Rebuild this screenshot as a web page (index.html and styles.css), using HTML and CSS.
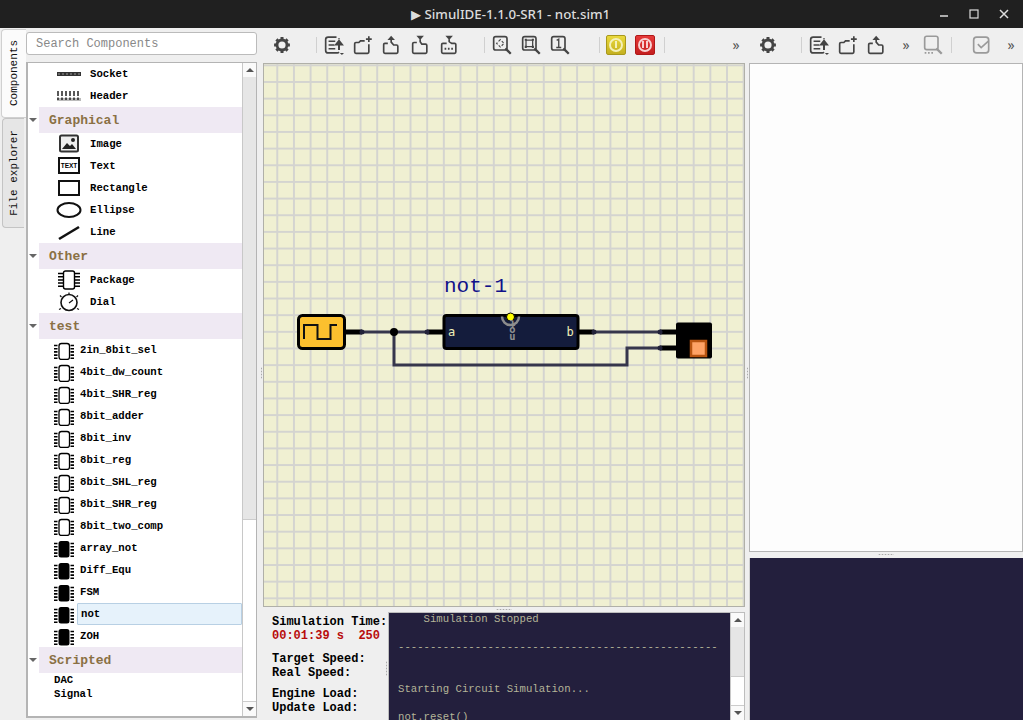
FILE: index.html
```html
<!DOCTYPE html>
<html lang="en">
<head>
    <meta charset="UTF-8">
    <title>SimulIDE-1.1.0-SR1 - not.sim1</title>
    <link rel="stylesheet" href="styles.css">
</head>
<body>
    <svg class="defs" width="0" height="0">
        <defs>
            <symbol id="i-gear" viewBox="0 0 24 24">
                <circle cx="12" cy="12" r="6" fill="none" stroke="currentColor" stroke-width="3.4"/>
                <path d="M12 2.500v4M12 17.500v4M2.500 12h4M17.500 12h4M5.300 5.300l2.800 2.800M15.900 15.900l2.800 2.800M5.300 18.700l2.800-2.800M15.900 8.100l2.800-2.800" stroke="currentColor" stroke-width="3.600" fill="none"/>
            </symbol>
            <symbol id="i-list" viewBox="0 0 24 24">
                <path d="M15 2.500H5a3 3 0 0 0-3 3v13a3 3 0 0 0 3 3h11a3 3 0 0 0 2-1M18 5V4" fill="none" stroke="currentColor" stroke-width="2"/>
                <path d="M5.500 7.500h8M5.500 12h7M5.500 16.500h8" stroke="currentColor" stroke-width="2"/>
                <path d="M18 18V9M14.500 11.500L18 7l3.500 4.500z" stroke="currentColor" stroke-width="2.400" fill="currentColor"/>
                <path d="M19 21.500h5l-2.500 2.500z" fill="currentColor"/>
            </symbol>
            <symbol id="i-new" viewBox="0 0 24 24">
                <path d="M14 7H9L7 9H3.500A1.500 1.500 0 0 0 2 10.500v10A1.500 1.500 0 0 0 3.500 22h14a1.500 1.500 0 0 0 1.500-1.500V11" fill="none" stroke="currentColor" stroke-width="2"/>
                <path d="M19 1.500v7M15.500 5h7" stroke="currentColor" stroke-width="2"/>
            </symbol>
            <symbol id="i-open" viewBox="0 0 24 24">
                <path d="M7 10H3.500A1.500 1.500 0 0 0 2 11.500v9A1.500 1.500 0 0 0 3.500 22h14a1.500 1.500 0 0 0 1.500-1.500v-7A1.500 1.500 0 0 0 17.500 12H14l-3-3.500V6" fill="none" stroke="currentColor" stroke-width="2"/>
                <path d="M6.500 6h9L11 1z" fill="currentColor"/>
            </symbol>
            <symbol id="i-down" viewBox="0 0 24 24">
                <path d="M7 9H3.500A1.500 1.500 0 0 0 2 10.500v10A1.500 1.500 0 0 0 3.500 22h14a1.500 1.500 0 0 0 1.500-1.500v-8A1.500 1.500 0 0 0 17.500 11H13l-2-3V5" fill="none" stroke="currentColor" stroke-width="2"/>
                <path d="M6.500 1h9L11 6z" fill="currentColor"/>
            </symbol>
            <symbol id="i-dots" viewBox="0 0 24 24">
                <path d="M8 10H3.500A1.500 1.500 0 0 0 2 11.500v9A1.500 1.500 0 0 0 3.500 22h14a1.500 1.500 0 0 0 1.500-1.500v-9a1.500 1.500 0 0 0-1.500-1.500H14l-3-2V5" fill="none" stroke="currentColor" stroke-width="2"/>
                <path d="M6.500 1h9L11 6z" fill="currentColor"/>
                <path d="M5.500 16.500h2M9.500 16.500h2M13.500 16.500h2" stroke="currentColor" stroke-width="2.200"/>
            </symbol>
            <symbol id="i-zfit" viewBox="0 0 24 24">
                <rect x="2" y="2" width="16" height="16" rx="2.500" fill="none" stroke="currentColor" stroke-width="2"/>
                <path d="M16 16l6.500 6.500" stroke="currentColor" stroke-width="2.800"/>
                <path d="M10 5.500L5.500 10l4.500 4.500 4.500-4.500z" fill="none" stroke="currentColor" stroke-width="1.300" stroke-dasharray="3 2"/>
            </symbol>
            <symbol id="i-zsel" viewBox="0 0 24 24">
                <rect x="2" y="2" width="16" height="16" rx="2.500" fill="none" stroke="currentColor" stroke-width="2"/>
                <path d="M16 16l6.500 6.500" stroke="currentColor" stroke-width="2.800"/>
                <rect x="6" y="6" width="8" height="8" rx="1" fill="none" stroke="currentColor" stroke-width="1.500"/>
                <path d="M4.500 4.500h2.500v2.500h-2.500zM13 4.500h2.500v2.500H13zM4.500 13h2.500v2.500h-2.500zM13 13h2.500v2.500H13z" fill="currentColor"/>
            </symbol>
            <symbol id="i-zone" viewBox="0 0 24 24">
                <rect x="2" y="2" width="16" height="16" rx="2.500" fill="none" stroke="currentColor" stroke-width="2"/>
                <path d="M16 16l6.500 6.500" stroke="currentColor" stroke-width="2.800"/>
                <path d="M8 6.500l2.500-1.500v10M7.500 15h6" fill="none" stroke="currentColor" stroke-width="1.600"/>
            </symbol>
            <symbol id="i-zdots" viewBox="0 0 24 24">
                <rect x="2" y="1.500" width="16" height="16" rx="2.500" fill="none" stroke="currentColor" stroke-width="2"/>
                <path d="M16 16l6.500 6.500" stroke="currentColor" stroke-width="2.800"/>
                <path d="M2 21.500h2M6 21.500h2M10 21.500h2" stroke="currentColor" stroke-width="2"/>
            </symbol>
            <symbol id="i-check" viewBox="0 0 24 24">
                <rect x="2" y="2.500" width="18" height="19" rx="3.500" fill="none" stroke="currentColor" stroke-width="2"/>
                <path d="M7 11l4 4 9-8" fill="none" stroke="currentColor" stroke-width="2"/>
            </symbol>

            <symbol id="c-socket" viewBox="0 0 26 12">
                <rect x="1" y="4" width="24" height="4" fill="#333"/>
                <path d="M2 6h22" stroke="#999" stroke-width="1" stroke-dasharray="2 2"/>
            </symbol>
            <symbol id="c-header" viewBox="0 0 26 12">
                <rect x="1" y="8" width="24" height="3" fill="#bbb"/>
                <path d="M2 1v9M6 1v9M10 1v9M14 1v9M18 1v9M22 1v9" stroke="#222" stroke-width="1.500" stroke-dasharray="5 1.500"/>
            </symbol>
            <symbol id="c-image" viewBox="0 0 22 20">
                <rect x="2" y="1.500" width="18" height="16" rx="1.500" fill="#eee" stroke="#333" stroke-width="2"/>
                <path d="M4 15l5-6 3 3 2-2 4 5z" fill="#222"/>
                <circle cx="15" cy="6" r="2" fill="#222"/>
            </symbol>
            <symbol id="c-chip" viewBox="0 0 22 20">
                <rect x="5" y="3.500" width="10.500" height="16" rx="2.500" fill="#fff" stroke="#000" stroke-width="1.300"/>
                <path d="M0 5.500h3.500M0 8.700h3.500M0 11.900h3.500M0 15.100h3.500M0 18.300h3.500M16.500 5.500H20M16.500 8.700H20M16.500 11.900H20M16.500 15.100H20M16.500 18.300H20" stroke="#000" stroke-width="1.600"/>
            </symbol>
            <symbol id="c-chipb" viewBox="0 0 22 20">
                <rect x="4.500" y="3" width="11" height="16.500" rx="2.500" fill="#000"/>
                <path d="M0 5.500h3.500M0 8.700h3.500M0 11.900h3.500M0 15.100h3.500M0 18.300h3.500M16.500 5.500H20M16.500 8.700H20M16.500 11.900H20M16.500 15.100H20M16.500 18.300H20" stroke="#000" stroke-width="1.600"/>
            </symbol>
        </defs>
    </svg>

    <header class="titlebar">
        <span class="title">▶ SimulIDE-1.1.0-SR1 - not.sim1</span>
        <div class="winbtns">
            <svg width="10" height="10"><path d="M1 7h8" stroke="#ddd" stroke-width="1.500"/></svg>
            <svg width="10" height="10"><rect x="1" y="1" width="8" height="8" fill="none" stroke="#ddd" stroke-width="1.200"/></svg>
            <svg width="10" height="10"><path d="M1 1l8 8M9 1l-8 8" stroke="#ddd" stroke-width="1.500"/></svg>
        </div>
    </header>

    <div class="main">
        <aside class="side">
            <div class="tabs">
                <div class="tab active"><span>Components</span></div>
                <div class="tab"><span>File explorer</span></div>
            </div>
            <div class="panel">
                <div class="search">Search Components</div>
                <div class="tree">
                    <div class="tree-body">
                        <div class="row"><svg class="ico"><use href="#c-socket"/></svg>Socket</div>
                        <div class="row"><svg class="ico"><use href="#c-header"/></svg>Header</div>
                        <div class="group">Graphical</div>
                        <div class="row"><svg class="ico"><use href="#c-image"/></svg>Image</div>
                        <div class="row">
                            <svg class="ico" viewBox="0 0 26 20"><rect x="3" y="2" width="20" height="15" fill="#fff" stroke="#111" stroke-width="2"/><text x="13" y="12" class="ico-text">TEXT</text></svg>Text
                        </div>
                        <div class="row">
                            <svg class="ico" viewBox="0 0 26 20"><rect x="3" y="3" width="20" height="14" fill="#fff" stroke="#111" stroke-width="2"/></svg>Rectangle
                        </div>
                        <div class="row">
                            <svg class="ico" viewBox="0 0 26 20"><ellipse cx="13" cy="10" rx="11.500" ry="7" fill="#fff" stroke="#111" stroke-width="2"/></svg>Ellipse
                        </div>
                        <div class="row">
                            <svg class="ico" viewBox="0 0 26 20"><path d="M3 17L23 5" stroke="#111" stroke-width="2.600"/></svg>Line
                        </div>
                        <div class="group">Other</div>
                        <div class="row">
                            <svg class="ico" viewBox="0 0 26 20"><rect x="7.500" y="1" width="11" height="18" rx="2" fill="#fff" stroke="#000" stroke-width="1.400"/><path d="M2 3.500h5M2 6.700h5M2 9.900h5M2 13.100h5M2 16.300h5M19 3.500h5M19 6.700h5M19 9.900h5M19 13.100h5M19 16.300h5" stroke="#000" stroke-width="1.500"/></svg>Package
                        </div>
                        <div class="row">
                            <svg class="ico" viewBox="0 0 26 20"><circle cx="13" cy="10.500" r="8" fill="#fff" stroke="#111" stroke-width="1.600"/><path d="M13 11l4-3M13 .5v2M4 3.500l1.500 1.500M22 3.500L20.500 5M3 17.500l2-1M23 17.500l-2-1" stroke="#111" stroke-width="1.200"/></svg>Dial
                        </div>
                        <div class="group">test</div>
                        <div class="row sub"><svg class="chip"><use href="#c-chip"/></svg>2in_8bit_sel</div>
                        <div class="row sub"><svg class="chip"><use href="#c-chip"/></svg>4bit_dw_count</div>
                        <div class="row sub"><svg class="chip"><use href="#c-chip"/></svg>4bit_SHR_reg</div>
                        <div class="row sub"><svg class="chip"><use href="#c-chip"/></svg>8bit_adder</div>
                        <div class="row sub"><svg class="chip"><use href="#c-chip"/></svg>8bit_inv</div>
                        <div class="row sub"><svg class="chip"><use href="#c-chip"/></svg>8bit_reg</div>
                        <div class="row sub"><svg class="chip"><use href="#c-chip"/></svg>8bit_SHL_reg</div>
                        <div class="row sub"><svg class="chip"><use href="#c-chip"/></svg>8bit_SHR_reg</div>
                        <div class="row sub"><svg class="chip"><use href="#c-chip"/></svg>8bit_two_comp</div>
                        <div class="row sub"><svg class="chip"><use href="#c-chipb"/></svg>array_not</div>
                        <div class="row sub"><svg class="chip"><use href="#c-chipb"/></svg>Diff_Equ</div>
                        <div class="row sub"><svg class="chip"><use href="#c-chipb"/></svg>FSM</div>
                        <div class="row sub"><svg class="chip"><use href="#c-chipb"/></svg><span class="selected">not</span></div>
                        <div class="row sub"><svg class="chip"><use href="#c-chipb"/></svg>ZOH</div>
                        <div class="group">Scripted</div>
                        <div class="row plain">DAC</div>
                        <div class="row plain">Signal</div>
                    </div>
                    <div class="sbar">
                        <div class="sbtn"><i class="up"></i></div>
                        <div class="shandle tree-handle"></div>
                        <div class="strack"></div>
                        <div class="sbtn"><i class="dn"></i></div>
                    </div>
                </div>
            </div>
        </aside>

        <div class="work">
            <div class="toolbar">
                <button class="tb"><svg><use href="#i-gear"/></svg></button>
                <i class="sep s1"></i>
                <button class="tb"><svg><use href="#i-list"/></svg></button>
                <button class="tb"><svg><use href="#i-new"/></svg></button>
                <button class="tb"><svg><use href="#i-open"/></svg></button>
                <button class="tb"><svg><use href="#i-down"/></svg></button>
                <button class="tb"><svg><use href="#i-dots"/></svg></button>
                <i class="sep s1"></i>
                <button class="tb"><svg><use href="#i-zfit"/></svg></button>
                <button class="tb"><svg><use href="#i-zsel"/></svg></button>
                <button class="tb"><svg><use href="#i-zone"/></svg></button>
                <i class="sep s2"></i>
                <button class="tb"><span class="pow yellow"><b></b></span></button>
                <button class="tb"><span class="pow red"><b class="pause"></b></span></button>
                <i class="sep s3"></i>
                <span class="more m1">»</span>
                <button class="tb t2"><svg><use href="#i-gear"/></svg></button>
                <i class="sep s4"></i>
                <button class="tb"><svg><use href="#i-list"/></svg></button>
                <button class="tb"><svg><use href="#i-new"/></svg></button>
                <button class="tb"><svg><use href="#i-open"/></svg></button>
                <span class="more">»</span>
                <button class="tb off t3"><svg><use href="#i-zdots"/></svg></button>
                <i class="sep s5"></i>
                <button class="tb off t4"><svg><use href="#i-check"/></svg></button>
                <span class="more">»</span>
            </div>

            <div class="panes">
                <div class="center">
                    <div class="canvas">
                        <svg class="circuit" viewBox="263 63 482 544" width="482" height="544">
                            <text x="444" y="292" class="comp-name">not-1</text>

                            <!-- cables -->
                            <path d="M360 332H429M394 332V365H627V348H662M594 332H662" fill="none" stroke="#36364c" stroke-width="3"/>
                            <circle cx="394" cy="332" r="4" fill="#000"/>

                            <!-- pins -->
                            <path d="M345 332H362M427 332H443M578 332H594M660 332H676M660 348H676" stroke="#000" stroke-width="5"/>
                            <circle cx="362" cy="332" r="2.500" fill="#23233a"/>
                            <circle cx="427" cy="332" r="2.500" fill="#23233a"/>
                            <circle cx="594" cy="332" r="2.500" fill="#23233a"/>
                            <circle cx="660" cy="332" r="2.500" fill="#23233a"/>
                            <circle cx="660" cy="348" r="2.500" fill="#23233a"/>

                            <!-- clock -->
                            <rect x="298.500" y="315.500" width="46" height="33" rx="4" fill="#fcc02e" stroke="#000" stroke-width="3"/>
                            <path d="M304 339V325H317.500V339H330.500V325H337" fill="none" stroke="#111" stroke-width="2"/>

                            <!-- subcircuit -->
                            <rect x="444" y="315.500" width="134" height="33" rx="2.500" fill="#141c3c" stroke="#000" stroke-width="3"/>
                            <text x="448" y="336" class="pin-label">a</text>
                            <text x="566.500" y="336" class="pin-label">b</text>
                            <path d="M502 316.500a8.500 8.500 0 0 0 17 0" fill="none" stroke="#8c8c8c" stroke-width="2.500"/>
                            <circle cx="510.500" cy="317" r="4" fill="#ff0" stroke="#000" stroke-width="1"/>
                            <text x="515.500 515.500 515.500" y="334 327 320" rotate="180" class="chip-label">not</text>

                            <!-- led -->
                            <rect x="676" y="322.500" width="36" height="36" rx="2" fill="#000"/>
                            <rect x="691" y="341" width="15" height="15" fill="#ffa366" stroke="#b85410" stroke-width="2.500"/>
                        </svg>
                    </div>
                    <div class="hgrip"></div>
                    <div class="bottom">
                        <div class="info">
                            <div>Simulation Time:</div>
                            <div class="time">00:01:39 s&nbsp;&nbsp;250</div>
                            <div class="gap">Target Speed:</div>
                            <div>Real Speed:</div>
                            <div class="gap2">Engine Load:</div>
                            <div>Update Load:</div>
                        </div>
                        <div class="term-wrap">
                            <pre class="term">    Simulation Stopped

--------------------------------------------------


Starting Circuit Simulation...

not.reset()</pre>
                            <div class="sbar">
                                <div class="sbtn"><i class="up"></i></div>
                                <div class="shandle term-handle"></div>
                                <div class="strack"></div>
                                <div class="sbtn"><i class="dn"></i></div>
                            </div>
                        </div>
                    </div>
                </div>
                <div class="right">
                    <div class="props"></div>
                    <div class="hgrip small"></div>
                    <div class="dark"></div>
                </div>
            </div>
        </div>
    </div>
</body>
</html>
```

FILE: styles.css
```css
* {
    margin: 0;
    padding: 0;
    box-sizing: border-box;
}

body {
    width: 1023px;
    height: 720px;
    overflow: hidden;
    background-color: #efefef;
    font-family: "Liberation Mono", monospace;
    display: flex;
    flex-direction: column;
}

.defs {
    position: absolute;
}

/* Barra de titulo */
.titlebar {
    height: 28px;
    flex: none;
    background-color: #202020;
    display: flex;
    align-items: center;
    padding-left: 411px;
}

.title {
    font-family: "Noto Sans", sans-serif;
    font-size: 13.3px;
    font-weight: 500;
    color: #dcdcdc;
    white-space: nowrap;
}

.winbtns {
    margin-left: auto;
    display: flex;
    gap: 20px;
    padding-right: 14px;
}

.main {
    flex: 1;
    display: flex;
    min-height: 0;
}

/* Painel esquerdo */
.side {
    width: 260px;
    flex: none;
    display: flex;
}

.tabs {
    width: 26px;
    flex: none;
    padding-top: 1px;
}

.tab {
    width: 22px;
    height: 110px;
    margin-left: 2px;
    background-color: #e6e6e6;
    border: 1px solid #c4c4c4;
    border-right: none;
    border-radius: 4px 0 0 4px;
    display: flex;
    align-items: center;
    justify-content: center;
}

.tab.active {
    width: 25px;
    height: 89px;
    margin-left: 1px;
    background-color: #fbfbfb;
    border-color: #d0d0d0;
}

.tab span {
    writing-mode: vertical-rl;
    transform: rotate(180deg);
    font-size: 11px;
    color: #111;
}

.panel {
    width: 232px;
    flex: none;
    padding-top: 4px;
    display: flex;
    flex-direction: column;
}

.search {
    height: 23px;
    margin-right: 1px;
    background-color: #fff;
    border: 1px solid #bbb;
    border-radius: 3px;
    padding-left: 9px;
    font-size: 12px;
    line-height: 23px;
    color: #888;
}

.tree {
    margin-top: 7px;
    margin-right: 1px;
    height: 656px;
    border: 2px solid #b4b4b4;
    border-width: 1px 1px 2px 2px;
    background-color: #fff;
    display: flex;
}

.tree-body {
    flex: 1;
    min-width: 0;
}

.row {
    height: 22px;
    display: flex;
    align-items: center;
    font-size: 10.67px;
    font-weight: bold;
    color: #000;
    padding-left: 28px;
    white-space: nowrap;
}

.ico {
    width: 26px;
    height: 20px;
    margin-right: 8px;
    flex: none;
}

.ico-text {
    font-family: "Liberation Sans", sans-serif;
    font-size: 6.5px;
    font-weight: bold;
    text-anchor: middle;
}

.row.sub {
    padding-left: 26px;
}

.chip {
    width: 22px;
    height: 20px;
    margin-right: 4px;
    flex: none;
}

.selected {
    flex: 1;
    height: 22px;
    margin-left: -3px;
    padding-left: 3px;
    line-height: 20px;
    background-color: #e6f2fb;
    border: 1px solid #b8d0e4;
    border-radius: 1px;
}

.row.plain {
    height: 14px;
    padding-left: 26px;
}

.group {
    height: 26px;
    margin-left: 11px;
    padding-left: 10px;
    background-color: #efe9f3;
    font-size: 13px;
    font-weight: bold;
    line-height: 28px;
    color: #8a7044;
    position: relative;
}

/* seta do grupo */
.group::before {
    content: "";
    position: absolute;
    left: -10px;
    top: 11px;
    border-left: 4px solid transparent;
    border-right: 4px solid transparent;
    border-top: 4px solid #666;
}

/* Scrollbars */
.sbar {
    width: 14px;
    flex: none;
    display: flex;
    flex-direction: column;
    background-color: #fff;
    border-left: 1px solid #c8c8c8;
}

.sbtn {
    height: 14px;
    flex: none;
    background-color: #fafafa;
    display: flex;
    align-items: center;
    justify-content: center;
}

.sbtn i {
    border-left: 4px solid transparent;
    border-right: 4px solid transparent;
}

.sbtn .up {
    border-bottom: 4px solid #555;
}

.sbtn .dn {
    border-top: 4px solid #555;
}

.shandle {
    background-color: #e6e6e6;
    border-bottom: 1px solid #ccc;
    flex: none;
}

.tree-handle {
    height: 443px;
}

.term-handle {
    height: 50px;
}

.strack {
    flex: 1;
    background-color: #fff;
    border-bottom: 1px solid #ccc;
}

/* Area central */
.work {
    flex: 1;
    min-width: 0;
    display: flex;
    flex-direction: column;
}

.toolbar {
    height: 35px;
    flex: none;
    display: flex;
    align-items: center;
    padding-left: 7px;
    padding-bottom: 2px;
}

.tb {
    width: 29px;
    height: 28px;
    flex: none;
    background: none;
    border: none;
    color: #444;
    display: flex;
    align-items: center;
    justify-content: center;
}

.tb svg {
    width: 20px;
    height: 20px;
}

.tb.off {
    color: #9a9a9a;
}

.t2 {
    margin-left: 10px;
}

.t3 {
    margin-left: 5px;
}

.t4 {
    margin-left: 15px;
}

.sep {
    width: 1px;
    height: 16px;
    flex: none;
    background-color: #d0d0d0;
}

.s1 {
    margin: 0 2px 0 20px;
}

.s2 {
    margin: 0 1px 0 25px;
}

.s3 {
    margin: 0 0 0 5px;
}

.s4 {
    margin: 0 2px 0 19px;
}

.s5 {
    margin: 0 0 0 4px;
}

.more {
    width: 14px;
    flex: none;
    margin-left: 8px;
    font-family: "Noto Sans", sans-serif;
    font-size: 14px;
    line-height: 14px;
    color: #555;
    text-align: center;
}

.m1 {
    margin-left: 64px;
}

.pow {
    width: 20px;
    height: 20px;
    border-radius: 2px;
    display: flex;
    align-items: center;
    justify-content: center;
}

.pow.yellow {
    background: linear-gradient(#ead93c, #c4b020);
    border: 1px solid #a8981c;
}

.pow.red {
    background: linear-gradient(#e63a3a, #c41e1e);
    border: 1px solid #b01818;
}

.pow b {
    width: 14px;
    height: 14px;
    border-radius: 50%;
    border: 2px solid #f4f0b8;
    display: flex;
    justify-content: center;
    align-items: center;
}

.pow b::after {
    content: "";
    width: 2px;
    height: 7px;
    background-color: #f4f0b8;
}

.pow b.pause {
    border-color: #f8d0d0;
}

.pow b.pause::after {
    width: 6px;
    background: linear-gradient(90deg, #f8d0d0 33%, transparent 33%, transparent 67%, #f8d0d0 67%);
}

.panes {
    flex: 1;
    min-height: 0;
    display: flex;
    position: relative;
}

/* puxadores verticais dos splitters */
.panes::before,
.panes::after {
    content: "";
    position: absolute;
    top: 304px;
    width: 1px;
    height: 12px;
    background-image: radial-gradient(#aaa 40%, transparent 50%);
    background-size: 1px 3px;
}

.panes::before {
    left: 1px;
}

.panes::after {
    left: 487px;
}

.center {
    width: 485px;
    flex: none;
    padding-left: 3px;
    display: flex;
    flex-direction: column;
}

.canvas {
    width: 482px;
    height: 544px;
    flex: none;
    border: 1px solid #b0b0a8;
    background-color: #f0f0d2;
    background-image:
        linear-gradient(90deg, #d4d4d0 2px, transparent 2px),
        linear-gradient(#d4d4d0 2px, transparent 2px);
    background-size: 16.667px 16.667px;
    background-position: 12.300px 17px;
    overflow: hidden;
}

.circuit {
    display: block;
    margin: -1px;
}

.comp-name {
    font-family: "Liberation Mono", monospace;
    font-size: 21px;
    fill: #10108a;
}

.pin-label {
    font-family: "DejaVu Sans Mono", monospace;
    font-size: 12px;
    fill: #f0f0b8;
}

.chip-label {
    font-family: "DejaVu Sans Mono", monospace;
    font-size: 10.5px;
    font-weight: bold;
    fill: #8f8f8f;
}

.hgrip {
    height: 5px;
    flex: none;
    position: relative;
}

/* puxador pontilhado */
.hgrip::after {
    content: "";
    position: absolute;
    left: 50%;
    top: 2px;
    width: 16px;
    height: 1px;
    margin-left: -8px;
    background-image: radial-gradient(#aaa 40%, transparent 50%);
    background-size: 3px 1px;
}

.hgrip.small {
    height: 6px;
}

.bottom {
    flex: 1;
    min-height: 0;
    display: flex;
}

.info {
    width: 125px;
    flex: none;
    padding: 3px 0 0 9px;
    font-size: 12px;
    font-weight: bold;
    line-height: 14px;
    color: #000;
    white-space: nowrap;
    position: relative;
}

.info::after {
    content: "";
    position: absolute;
    right: 1px;
    top: 49px;
    width: 1px;
    height: 15px;
    background-image: radial-gradient(#aaa 40%, transparent 50%);
    background-size: 1px 3px;
}

.time {
    color: #b80c0c;
}

.gap {
    margin-top: 9px;
}

.gap2 {
    margin-top: 7px;
}

.term-wrap {
    flex: 1;
    min-width: 0;
    display: flex;
    border: 1px solid #bdbdbd;
    border-bottom: none;
    overflow: hidden;
}

.term {
    flex: 1;
    min-width: 0;
    margin-top: -1px;
    padding: 0 0 0 9px;
    background-color: #231f3d;
    color: #b4b498;
    font-family: "Liberation Mono", monospace;
    font-size: 10.67px;
    line-height: 14px;
    overflow: hidden;
}

/* Painel direito */
.right {
    flex: 1;
    min-width: 0;
    padding-left: 4px;
    display: flex;
    flex-direction: column;
}

.props {
    height: 489px;
    flex: none;
    background-color: #fdfdfd;
    border: 1px solid #b4b4b4;
}

.dark {
    flex: 1;
    background-color: #231f3d;
    border-left: 1px solid #d0d0d0;
}
```
